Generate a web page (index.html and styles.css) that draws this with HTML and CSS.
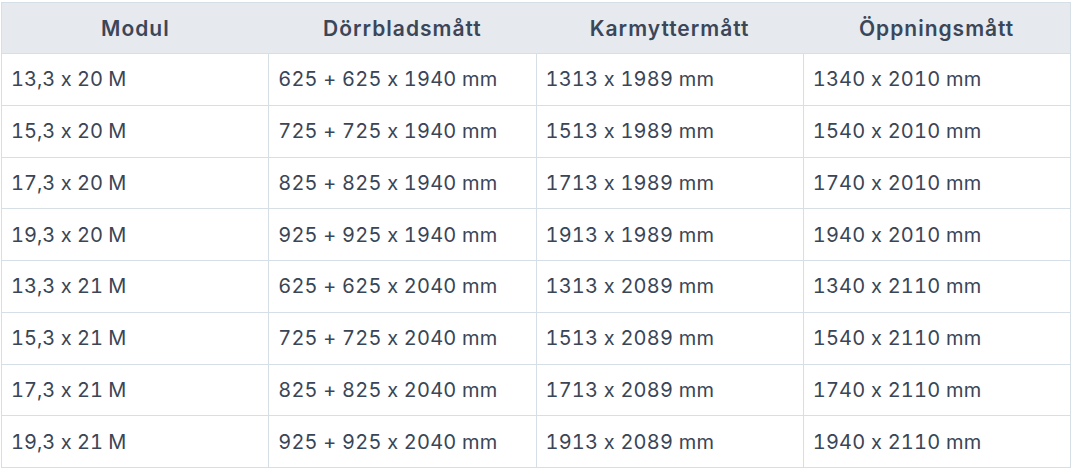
FILE: index.html
```html
<!DOCTYPE html>
<html lang="sv">
<head>
<meta charset="utf-8">
<link rel="stylesheet" href="styles.css">
</head>
<body>
<div class="wrap">
<table class="dims">
<thead>
<tr><th>Modul</th><th>Dörrbladsmått</th><th>Karmyttermått</th><th>Öppningsmått</th></tr>
</thead>
<tbody>
<tr><td>13,3 x 20 M</td><td>625 + 625 x 1940 mm</td><td>1313 x 1989 mm</td><td>1340 x 2010 mm</td></tr>
<tr><td>15,3 x 20 M</td><td>725 + 725 x 1940 mm</td><td>1513 x 1989 mm</td><td>1540 x 2010 mm</td></tr>
<tr><td>17,3 x 20 M</td><td>825 + 825 x 1940 mm</td><td>1713 x 1989 mm</td><td>1740 x 2010 mm</td></tr>
<tr><td>19,3 x 20 M</td><td>925 + 925 x 1940 mm</td><td>1913 x 1989 mm</td><td>1940 x 2010 mm</td></tr>
<tr><td>13,3 x 21 M</td><td>625 + 625 x 2040 mm</td><td>1313 x 2089 mm</td><td>1340 x 2110 mm</td></tr>
<tr><td>15,3 x 21 M</td><td>725 + 725 x 2040 mm</td><td>1513 x 2089 mm</td><td>1540 x 2110 mm</td></tr>
<tr><td>17,3 x 21 M</td><td>825 + 825 x 2040 mm</td><td>1713 x 2089 mm</td><td>1740 x 2110 mm</td></tr>
<tr><td>19,3 x 21 M</td><td>925 + 925 x 2040 mm</td><td>1913 x 2089 mm</td><td>1940 x 2110 mm</td></tr>
</tbody>
</table>
</div>
</body>
</html>
```
FILE: styles.css
```css
html, body {
  margin: 0;
  padding: 0;
  background: #ffffff;
}
.wrap {
  padding: 2px 0 0 1px;
}
.dims {
  width: 1070px;
  border-collapse: collapse;
  table-layout: fixed;
  font-family: Inter, "Noto Sans", sans-serif;
  font-feature-settings: "calt" 0, "tnum" 1;
  font-size: 20px;
  letter-spacing: 0.2px;
  color: #3a4556;
}
.dims th,
.dims td {
  border: 1px solid #d6dee6;
  height: 50.75px;
  padding: 0 9px;
  text-align: left;
  vertical-align: middle;
}
.dims td:first-child {
  letter-spacing: 0;
}
.dims th {
  height: 50px;
  background: #e6eaee;
  color: #3b4659;
  font-size: 21px;
  font-weight: 600;
  letter-spacing: 1px;
  text-align: center;
  border-left: none;
  border-right: none;
}
.dims th:first-child { border-left: 1px solid #d6dee6; }
.dims th:last-child { border-right: 1px solid #d6dee6; }
```
